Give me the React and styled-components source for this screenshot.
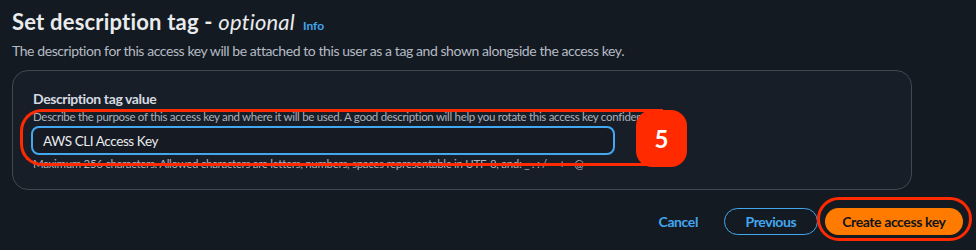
import styled, { createGlobalStyle } from 'styled-components'

const GlobalStyle = createGlobalStyle`
    html, body {
        margin: 0;
        padding: 0;
        background: #141a22;
    }
    body {
        font-family: Lato, "Open Sans", sans-serif;
        color: #e9ebed;
    }
`

const Page = styled.div`
    width: 976px;
    height: 250px;
    box-sizing: border-box;
    padding: 8px 13px 0 12px;
    background: #141a22;
    overflow: hidden;
`

const Header = styled.div`
    display: flex;
    flex-direction: column;
`

const Title = styled.h2`
    margin: 0;
    display: flex;
    align-items: baseline;
    gap: 8px;
    font-size: 22px;
    line-height: 28px;
    font-weight: 700;
    letter-spacing: 0.2px;
    color: #e9ebed;

    em {
        font-weight: 400;
    }
`

const InfoLink = styled.a`
    font-size: 12px;
    font-weight: 700;
    letter-spacing: 0;
    color: #42a7ef;
    text-decoration: none;
`

const Lead = styled.p`
    margin: 1px 0 0;
    font-size: 14px;
    line-height: 20px;
    letter-spacing: -0.42px;
    color: #b4bbc4;
`

const Card = styled.section`
    margin-top: 9px;
    width: 900px;
    box-sizing: border-box;
    padding: 18px 20px 17px 18px;
    background: #181e28;
    border: 1px solid #424852;
    border-radius: 16px;
`

const Field = styled.div`
    position: relative;
    display: flex;
    flex-direction: column;
`

const Label = styled.label`
    margin-left: 2px;
    font-size: 14px;
    line-height: 20px;
    font-weight: 700;
    letter-spacing: -0.4px;
    color: #d5dae0;
`

const Hint = styled.span`
    margin-left: 2px;
    font-size: 11.5px;
    line-height: 16px;
    letter-spacing: -0.3px;
    color: #aab2bc;
    white-space: nowrap;
`

const Input = styled.input`
    margin: 1px 0 1px;
    width: 584px;
    height: 29px;
    box-sizing: border-box;
    padding: 0 10px;
    background: #151a23;
    border: 2px solid #42a7ef;
    border-radius: 8px;
    font-family: Lato, "Open Sans", sans-serif;
    font-size: 13.5px;
    letter-spacing: -0.4px;
    color: #e9ebed;
    outline: none;
`

const Highlight = styled.div`
    position: absolute;
    left: -11px;
    top: 20px;
    width: 640px;
    height: 51px;
    border: 3px solid #ff2a00;
    border-right: none;
    border-radius: 22px 0 0 22px;
    pointer-events: none;
`

const StepBadge = styled.div`
    position: absolute;
    left: 605px;
    top: 21px;
    width: 51px;
    height: 57px;
    display: flex;
    align-items: center;
    justify-content: center;
    background: #ff2a00;
    border-radius: 16px;
    font-size: 24px;
    font-weight: 700;
    color: #fff;
`

const Footer = styled.div`
    margin-top: 18px;
    display: flex;
    justify-content: flex-end;
    align-items: center;
    gap: 7px;
`

const pad = { link: '19px', normal: '20.5px', primary: '17.5px' }

const Button = styled.button`
    position: relative;
    height: 27px;
    box-sizing: border-box;
    padding: 0 ${p => pad[p.$variant]};
    border-radius: 14px;
    font-family: Lato, "Open Sans", sans-serif;
    font-size: 14px;
    font-weight: 700;
    letter-spacing: -0.4px;
    cursor: pointer;
    background: ${p => (p.$variant === 'primary' ? '#ff7b00' : 'transparent')};
    color: ${p => (p.$variant === 'primary' ? '#0f141a' : '#42a7ef')};
    border: ${p => (p.$variant === 'normal' ? '1.5px solid #42a7ef' : 'none')};
`

const ButtonRing = styled.span`
    position: absolute;
    left: -8px;
    right: -9px;
    top: -11px;
    bottom: -6px;
    border: 3px solid #ff2a00;
    border-radius: 24px;
    pointer-events: none;
`

const App = () => {
    return (
        <>
            <GlobalStyle />
            <Page>
                <Header>
                    <Title>
                        <span>Set description tag - <em>optional</em></span>
                        <InfoLink href='#'>Info</InfoLink>
                    </Title>
                    <Lead>The description for this access key will be attached to this user as a tag and shown alongside the access key.</Lead>
                </Header>

                <Card>
                    <Field>
                        <Label>Description tag value</Label>
                        <Hint>Describe the purpose of this access key and where it will be used. A good description will help you rotate this access key confidently later.</Hint>
                        <Input defaultValue='AWS CLI Access Key' />
                        <Hint>Maximum 256 characters. Allowed characters are letters, numbers, spaces representable in UTF-8, and: _ . : / = + - @</Hint>
                        <Highlight />
                        <StepBadge>5</StepBadge>
                    </Field>
                </Card>

                <Footer>
                    <Button $variant='link'>Cancel</Button>
                    <Button $variant='normal'>Previous</Button>
                    <Button $variant='primary'>
                        Create access key
                        <ButtonRing />
                    </Button>
                </Footer>
            </Page>
        </>
    )
}

export default App
